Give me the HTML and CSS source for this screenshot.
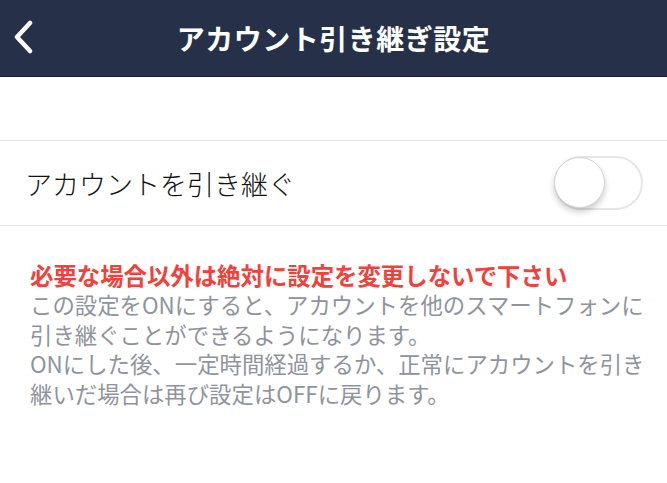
FILE: index.html
```html
<!DOCTYPE html>
<html lang="ja">
<head>
    <meta charset="UTF-8">
    <meta name="viewport" content="width=device-width, initial-scale=1.0">
    <title>アカウント引き継ぎ設定</title>
    <link rel="stylesheet" href="styles.css">
</head>
<body>
    <header class="nav-bar">
        <button class="back-btn" aria-label="戻る">
            <svg width="22" height="34" viewBox="0 0 22 34">
                <path d="M18 3 L5 17 L18 31" fill="none" stroke="#fff" stroke-width="4.5" stroke-linecap="round" stroke-linejoin="round"/>
            </svg>
        </button>
        <div class="nav-title">アカウント引き継ぎ設定</div>
    </header>

    <div class="spacer"></div>

    <div class="setting-row">
        <span class="setting-label">アカウントを引き継ぐ</span>
        <label class="toggle">
            <input type="checkbox">
            <span class="knob"></span>
        </label>
    </div>

    <div class="notice">
        <p class="warning">必要な場合以外は絶対に設定を変更しないで下さい</p>
        <p class="desc">この設定をONにすると、アカウントを他のスマートフォンに引き継ぐことができるようになります。</p>
        <p class="desc">ONにした後、一定時間経過するか、正常にアカウントを引き継いだ場合は再び設定はOFFに戻ります。</p>
    </div>
</body>
</html>
```

FILE: styles.css
```css
* {
    margin: 0;
    padding: 0;
    box-sizing: border-box;
    font-family: 'Noto Sans CJK JP', 'Noto Sans', sans-serif;
}

body {
    background-color: #ffffff;
    color: #111111;
}

.nav-bar {
    height: 77px;
    background-color: #263049;
    border-bottom: 1px solid #1a2033;
    display: flex;
    align-items: center;
    justify-content: center;
    position: relative;
}

.back-btn {
    position: absolute;
    left: 12px;
    top: 20px;
    background: none;
    border: none;
    cursor: pointer;
}

.nav-title {
    color: #ffffff;
    font-size: 28px;
    font-weight: bold;
    letter-spacing: 0.5px;
}

.spacer {
    height: 63px;
}

.setting-row {
    height: 86px;
    border-top: 1px solid #e3e3e3;
    border-bottom: 1px solid #e9e9e9;
    display: flex;
    align-items: center;
    justify-content: space-between;
    padding: 0 24px 0 25px;
}

.setting-label {
    font-size: 27px;
    font-weight: 300;
}

.toggle {
    position: relative;
    width: 89px;
    height: 54px;
}

.toggle input {
    display: none;
}

.toggle::before {
    content: '';
    position: absolute;
    inset: 0;
    border: 2px solid #e6e6e6;
    border-radius: 27px;
    background-color: #ffffff;
}

.knob {
    position: absolute;
    left: 0;
    top: 1px;
    width: 51px;
    height: 51px;
    border-radius: 50%;
    background-color: #ffffff;
    border: 1px solid #d4d4d4;
    box-shadow: 0 4px 6px rgba(0, 0, 0, 0.2);
}

.notice {
    padding: 35px 20px 0 30px;
}

.warning {
    color: #f2413a;
    font-size: 23.4px;
    font-weight: bold;
    line-height: 28px;
    margin-bottom: 1px;
}

.desc {
    color: #8f939c;
    font-size: 22.4px;
    line-height: 29.5px;
}
```
